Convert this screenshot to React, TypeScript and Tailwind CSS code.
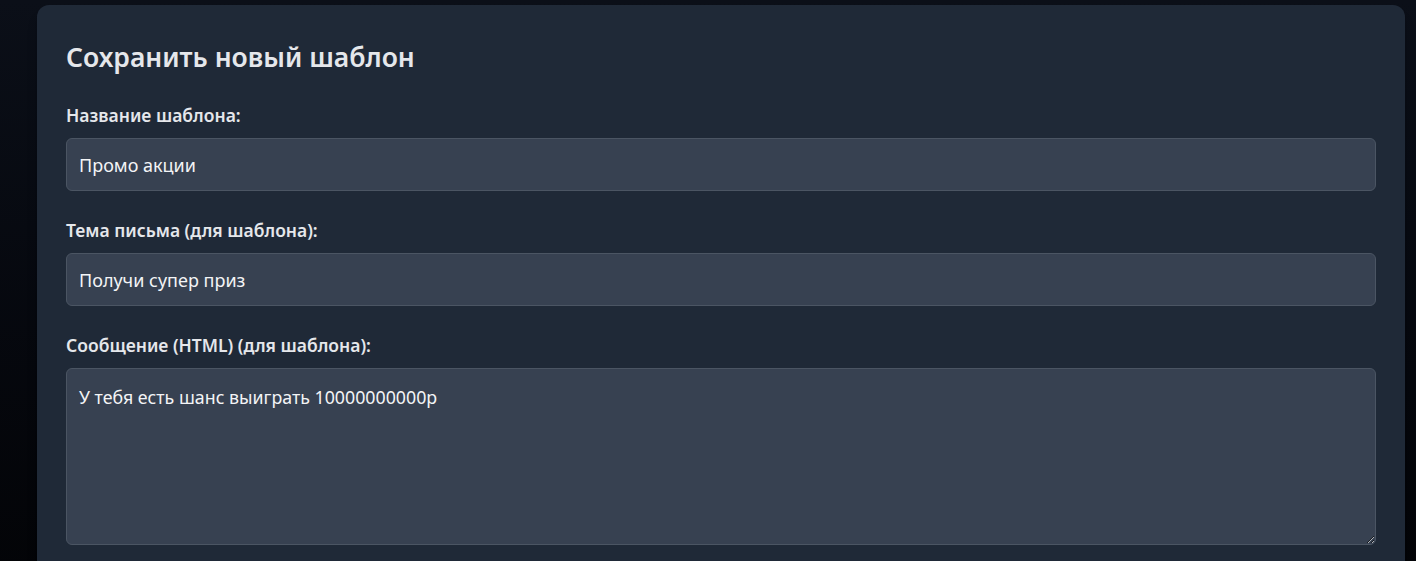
export default function App() {
  const font = { fontFamily: '"Noto Sans", "Open Sans", sans-serif' };

  return (
    <div
      className="min-h-screen bg-gradient-to-b from-[#0b0f18] to-[#030407] pt-[5px] pl-[37px] pr-[11px]"
      style={font}
    >
      <div className="rounded-t-xl bg-[#1f2937] px-[29px] pt-[34px] pb-10 shadow-lg">
        <h2 className="text-[26.5px] leading-9 font-semibold text-[#e5e7eb]">
          Сохранить новый шаблон
        </h2>

        <div className="mt-[28px] flex flex-col gap-[27px]">
          <div>
            <label className="block text-[17.5px] leading-6 font-semibold text-[#e5e7eb]">
              Название шаблона:
            </label>
            <input
              className="mt-[11px] block h-[53px] w-full rounded-md border border-[#4b5563] bg-[#374151] px-3 text-[18px] text-[#f3f4f6] outline-none"
              defaultValue="Промо акции"
            />
          </div>

          <div>
            <label className="block text-[17.5px] leading-6 font-semibold text-[#e5e7eb]">
              Тема письма (для шаблона):
            </label>
            <input
              className="mt-[11px] block h-[53px] w-full rounded-md border border-[#4b5563] bg-[#374151] px-3 text-[18px] text-[#f3f4f6] outline-none"
              defaultValue="Получи супер приз"
            />
          </div>

          <div>
            <label className="block text-[17.5px] leading-6 font-semibold text-[#e5e7eb]">
              Сообщение (HTML) (для шаблона):
            </label>
            <textarea
              className="mt-[11px] block h-[177px] w-full rounded-md border border-[#4b5563] bg-[#374151] px-3 py-4 text-[17.8px] leading-6 text-[#f3f4f6] outline-none"
              defaultValue="У тебя есть шанс выиграть 10000000000р"
            />
          </div>
        </div>
      </div>
    </div>
  );
}
